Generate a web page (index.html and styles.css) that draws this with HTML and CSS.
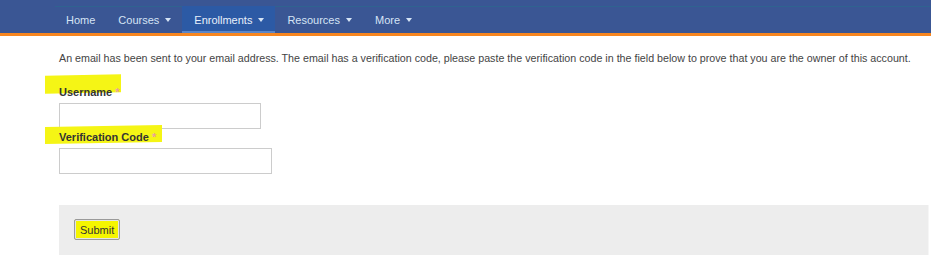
FILE: index.html
```html
<!DOCTYPE html>
<html lang="en">
<head>
  <meta charset="UTF-8">
  <meta name="viewport" content="width=device-width, initial-scale=1">
  <title>Verify Account</title>
  <link rel="stylesheet" href="styles.css">
</head>
<body>

  <div class="navbar">
    <ul class="nav">
      <li><a href="#">Home</a></li>
      <li><a href="#">Courses <span class="caret"></span></a></li>
      <li class="active"><a href="#">Enrollments <span class="caret"></span></a></li>
      <li><a href="#">Resources <span class="caret"></span></a></li>
      <li><a href="#">More <span class="caret"></span></a></li>
    </ul>
  </div>

  <div class="content">
    <p class="intro">An email has been sent to your email address. The email has a verification code, please paste the verification code in the field below to prove that you are the owner of this account.</p>

    <form id="verifyForm">
      <div class="form-group">
        <label for="username" class="marked mark-user">Username <span class="req">*</span></label>
        <input type="text" id="username" name="username" class="input-user">
      </div>
      <div class="form-group">
        <label for="code" class="marked mark-code">Verification Code <span class="req">*</span></label>
        <input type="text" id="code" name="code" class="input-code">
      </div>

      <div class="form-actions">
        <button type="submit" class="btn">Submit</button>
      </div>
    </form>
  </div>

</body>
</html>
```

FILE: styles.css
```css
/* Basic Reset */
* {
  box-sizing: border-box;
  margin: 0;
  padding: 0;
}

body {
  font-family: "Liberation Sans", Arial, sans-serif;
  background-color: #fff;
  color: #444;
}

/* Top navigation */
.navbar {
  background-color: #3a5694;
  height: 36px;
  border-bottom: 3px solid #f7861f;
  padding-left: 55px;
}

.nav {
  list-style: none;
  display: flex;
  height: 33px;
  border-top: 6px solid #3a5694;
  box-shadow: inset 0 1px 0 #2f6390;
}

.nav li a {
  display: flex;
  align-items: center;
  height: 27px;
  padding: 0 11px 0 11px;
  color: #d6e4f5;
  text-decoration: none;
  font-size: 11px;
}

.nav li + li a {
  padding-left: 12px;
}

.nav li.active a {
  background-color: #2c5aa5;
  border-bottom: 2px solid #5b86c7;
  padding-top: 2px;
  color: #e8f0fb;
}

.caret {
  display: inline-block;
  width: 0;
  height: 0;
  margin-left: 6px;
  border-top: 4px solid #d6e4f5;
  border-left: 3px solid transparent;
  border-right: 3px solid transparent;
}

/* Page content */
.content {
  padding: 15px 2px 0 59px;
}

.intro {
  font-size: 10.7px;
  line-height: 15px;
  white-space: nowrap;
  color: #444;
  margin-bottom: 19px;
}

.form-group label {
  display: block;
  font-size: 11px;
  font-weight: bold;
  color: #333;
  line-height: 14px;
  margin-bottom: 4px;
}

.form-group {
  margin-bottom: 1px;
}

.req {
  color: #e8a0a0;
}

/* Yellow marker strokes drawn over the labels */
.marked {
  position: relative;
  z-index: 0;
}

.marked::before {
  content: "";
  position: absolute;
  z-index: -1;
  background-color: #f5f515;
  transform: skewY(-1deg);
}

.mark-user::before {
  left: -14px;
  top: -10px;
  width: 76px;
  height: 18px;
}

.mark-code::before {
  left: -14px;
  top: -4px;
  width: 117px;
  height: 17px;
}

.form-group input {
  display: block;
  height: 26px;
  border: 1px solid #ccc;
  font-size: 12px;
  padding: 3px 5px;
}

.input-user {
  width: 202px;
}

.input-code {
  width: 213px;
}

.form-actions {
  margin-top: 31px;
  background-color: #ededed;
  border-right: 1px solid #f6f6f6;
  height: 50px;
  padding: 14px 15px;
}

.btn {
  height: 21px;
  padding: 0 5px;
  background-color: #f5f500;
  border: 1px solid #9a9a9a;
  border-radius: 2px;
  box-shadow: inset 0 0 0 1px #e4e4e4;
  color: #333;
  font-family: "Liberation Sans", Arial, sans-serif;
  font-size: 11px;
}
```
